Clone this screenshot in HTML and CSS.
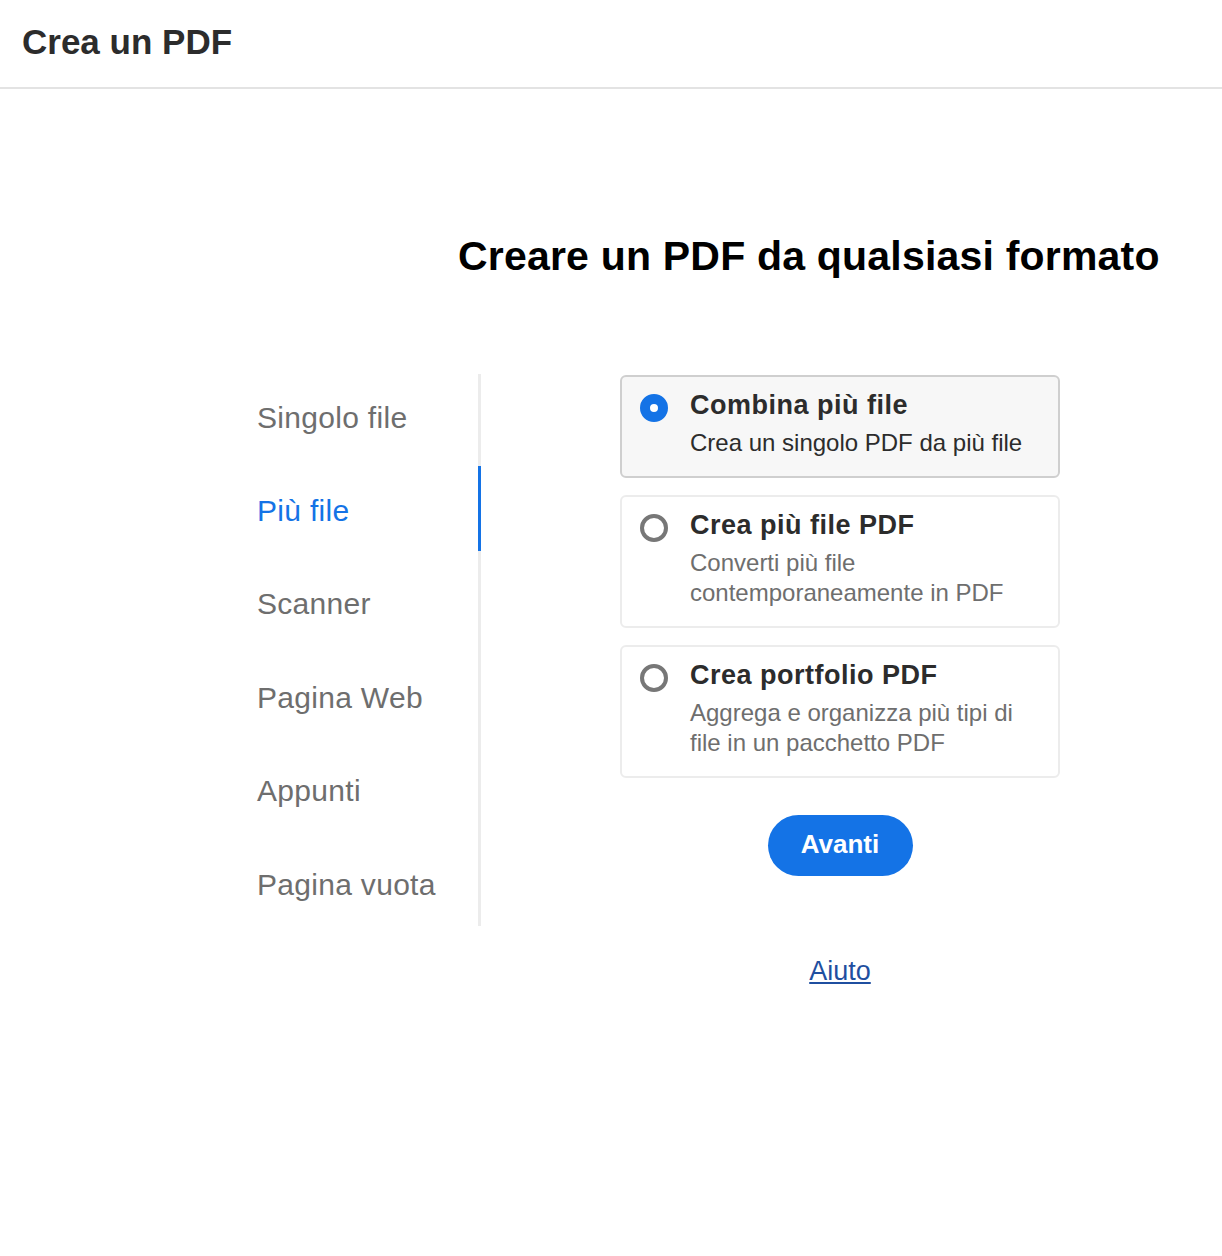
FILE: index.html
```html
<!DOCTYPE html>
<html lang="it">
<head>
<meta charset="utf-8">
<title>Crea un PDF</title>
<link rel="stylesheet" href="styles.css">
</head>
<body>
<header class="topbar">
  <h1 class="topbar-title">Crea un PDF</h1>
</header>
<main class="main">
  <h2 class="heading">Creare un PDF da qualsiasi formato</h2>
  <div class="layout">
    <nav class="nav">
      <div class="nav-item">Singolo file</div>
      <div class="nav-item active">Più file</div>
      <div class="nav-item">Scanner</div>
      <div class="nav-item">Pagina Web</div>
      <div class="nav-item">Appunti</div>
      <div class="nav-item">Pagina vuota</div>
    </nav>
    <section class="content">
      <div class="options">
        <div class="option selected">
          <span class="radio"></span>
          <div class="option-text">
            <div class="option-title">Combina più file</div>
            <div class="option-desc">Crea un singolo PDF da più file</div>
          </div>
        </div>
        <div class="option">
          <span class="radio"></span>
          <div class="option-text">
            <div class="option-title">Crea più file PDF</div>
            <div class="option-desc">Converti più file<br>contemporaneamente in PDF</div>
          </div>
        </div>
        <div class="option">
          <span class="radio"></span>
          <div class="option-text">
            <div class="option-title">Crea portfolio PDF</div>
            <div class="option-desc">Aggrega e organizza più tipi di<br>file in un pacchetto PDF</div>
          </div>
        </div>
      </div>
      <button class="btn-next" type="button">Avanti</button>
      <a class="help" href="#">Aiuto</a>
    </section>
  </div>
</main>
</body>
</html>
```

FILE: styles.css
```css
* { box-sizing: border-box; }

html, body {
  margin: 0;
  padding: 0;
  background: #ffffff;
  font-family: "Liberation Sans", Arial, sans-serif;
  color: #2c2c2c;
}

.topbar {
  height: 89px;
  border-bottom: 2px solid #e3e3e3;
  display: flex;
  align-items: center;
  padding-left: 22px;
}

.topbar-title {
  margin: 0;
  font-size: 35px;
  font-weight: 700;
  line-height: 40px;
  color: #2c2c2c;
  padding-bottom: 4px;
}

.main {
  display: flex;
  flex-direction: column;
}

.heading {
  margin: 143px 0 94px 458px;
  font-size: 41px;
  letter-spacing: 0.2px;
  font-weight: 700;
  line-height: 48px;
  color: #000000;
}

.layout {
  display: flex;
  padding-left: 257px;
}

.nav {
  width: 224px;
  border-right: 3px solid #ececec;
  display: flex;
  flex-direction: column;
  height: 552px;
}

.nav-item {
  position: relative;
  height: 93.4px;
  flex: none;
  display: flex;
  align-items: center;
  padding-bottom: 4px;
  font-size: 30px;
  letter-spacing: 0.3px;
  color: #6e6e6e;
}

.nav-item:first-child { margin-top: -1px; }

.nav-item.active { color: #1473e6; }

.nav-item.active::after {
  content: "";
  position: absolute;
  right: -3px;
  top: 0;
  width: 3px;
  height: 85px;
  background: #1473e6;
}

.content {
  margin-left: 139px;
  margin-top: 1px;
  width: 440px;
  display: flex;
  flex-direction: column;
  align-items: center;
}

.options {
  width: 440px;
  display: flex;
  flex-direction: column;
  gap: 17px;
}

.option {
  display: flex;
  align-items: flex-start;
  gap: 22px;
  border: 2px solid #ececec;
  border-radius: 6px;
  background: #ffffff;
  padding: 11px 16px 18px 18px;
}

.option.selected {
  background: #f7f7f7;
  border-color: #cfcfcf;
}

.radio {
  flex: none;
  width: 28px;
  height: 28px;
  margin-top: 6px;
  border-radius: 50%;
  border: 4px solid #777777;
  background: #ffffff;
}

.option.selected .radio {
  border: 10px solid #1473e6;
  background: #ffffff;
}

.option-text {
  display: flex;
  flex-direction: column;
  gap: 6px;
}

.option-title {
  font-size: 27px;
  letter-spacing: 0.5px;
  font-weight: 700;
  line-height: 34px;
  color: #2c2c2c;
}

.option-desc {
  font-size: 24px;
  line-height: 30px;
  color: #6e6e6e;
}

.option.selected .option-desc { color: #2c2c2c; }

.btn-next {
  margin-top: 37px;
  width: 145px;
  height: 61px;
  border: none;
  border-radius: 31px;
  background: #1473e6;
  color: #ffffff;
  font-family: "Liberation Sans", Arial, sans-serif;
  font-size: 26px;
  font-weight: 700;
  padding: 0 0 2px 0;
}

.help {
  margin-top: 80px;
  font-size: 27px;
  line-height: 30px;
  color: #1f4fa0;
  text-decoration: underline;
}
```
